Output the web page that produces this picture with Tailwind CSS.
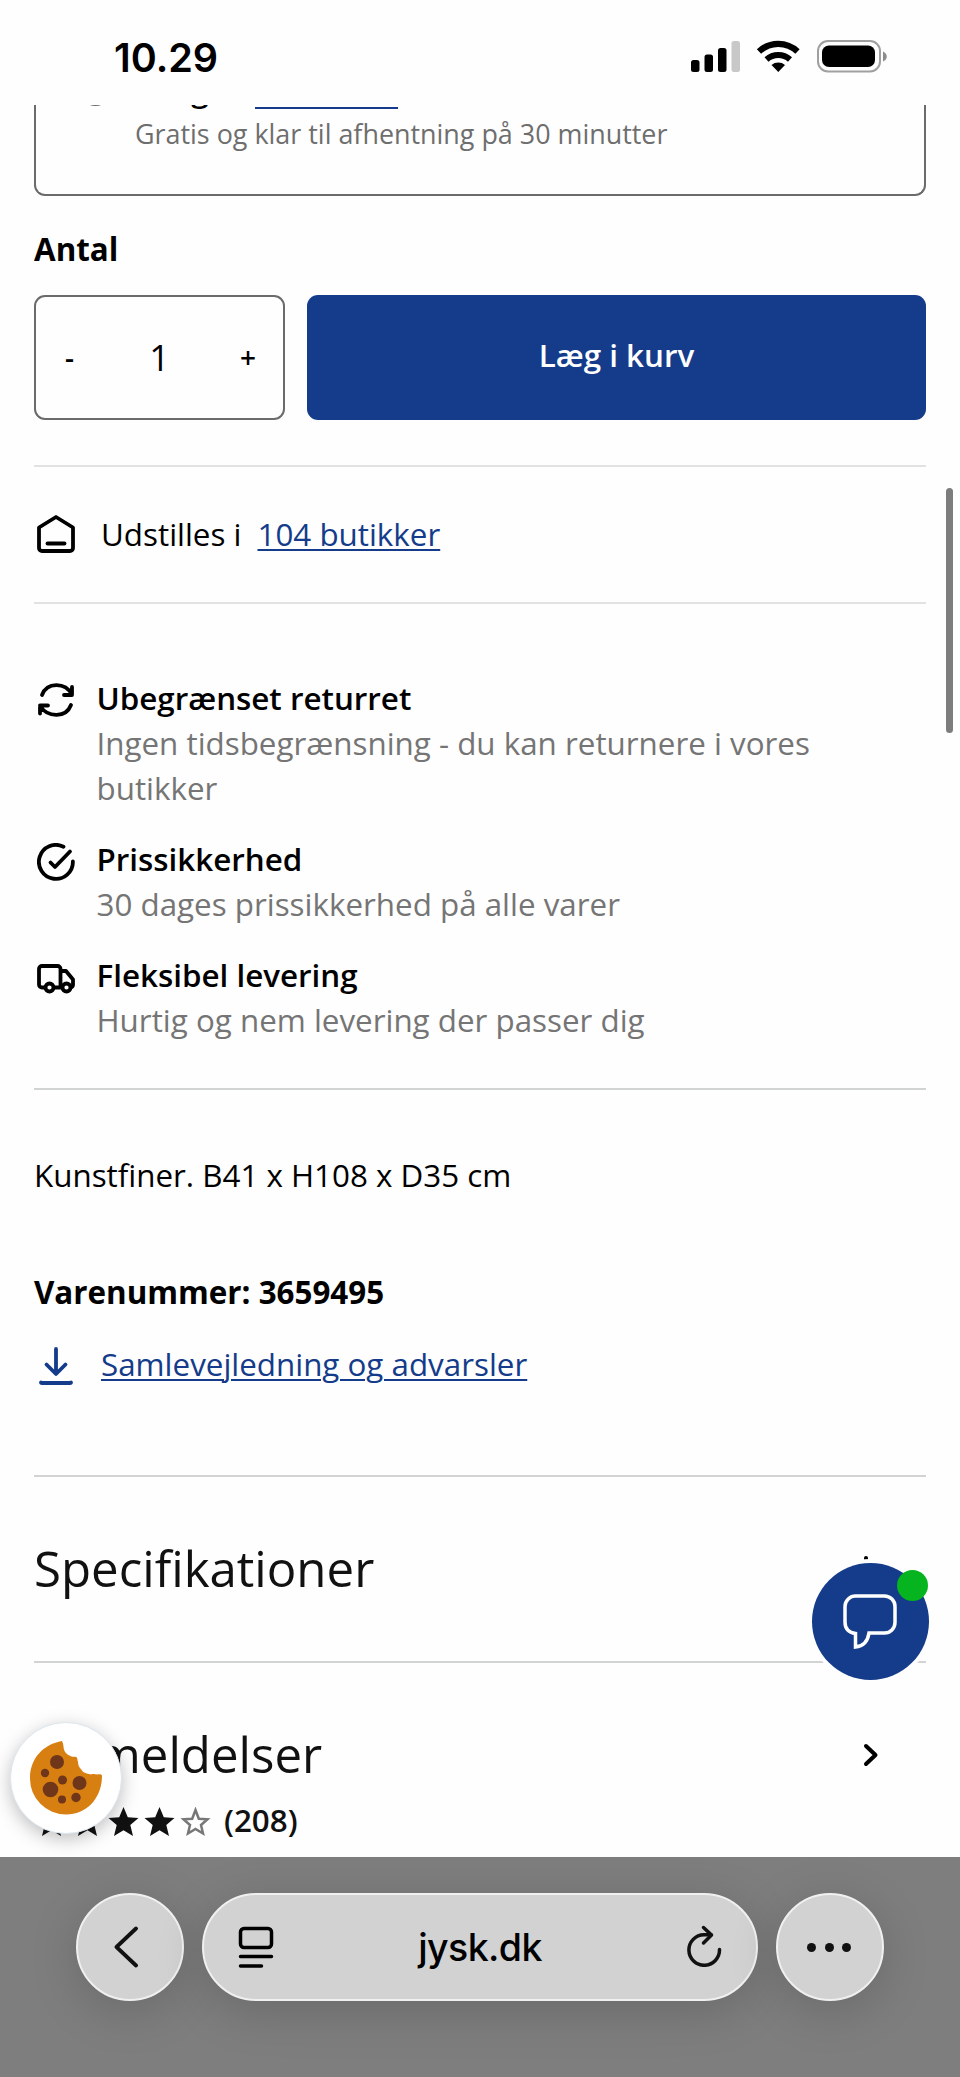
<!DOCTYPE html>
<html lang="da">

<head>
    <meta charset="UTF-8">
    <meta name="viewport" content="width=device-width, initial-scale=1.0">
    <title>JYSK</title>
    <script src="https://cdn.jsdelivr.net/npm/@tailwindcss/browser@4"></script>
</head>

<body class="bg-white">
    <div class="relative w-[960px] h-[2077px] overflow-hidden flex flex-col bg-[#fefefe] text-black font-['Open_Sans',sans-serif] text-[31.35px] leading-[45px]">

        <!-- Status bar -->
        <header class="h-[105px] shrink-0 flex items-start justify-between pl-[114px] pr-[72px]">
            <span class="mt-[34px] font-['Inter',sans-serif] font-semibold text-[39.5px] leading-[49px]">10.29</span>
            <svg class="mt-[40px]" width="197" height="33" viewBox="0 0 197 33">
                <rect x="0" y="20" width="8.500" height="12" rx="2.500" />
                <rect x="13.500" y="14.500" width="8.500" height="17.500" rx="2.500" />
                <rect x="27" y="8" width="8.500" height="24" rx="2.500" />
                <rect x="40.500" y="1" width="8.500" height="31" rx="2.500" fill="#c8c8c8" />
                <path d="M68 11.500a28 28 0 0 1 38.500 0" fill="none" stroke="#000" stroke-width="6.200" />
                <path d="M75.500 19.500a17.500 17.500 0 0 1 23.500 0" fill="none" stroke="#000" stroke-width="6" />
                <path d="M80.500 25a10.500 10.500 0 0 1 13.500 0L87.300 32z" />
                <rect x="127" y="1" width="62" height="30.500" rx="10" fill="none" stroke="#a0a0a0" stroke-width="2" />
                <rect x="131" y="5.500" width="53" height="21.500" rx="7" />
                <path d="M192 11.500c5 2 5 8 0 10z" fill="#8c8c8c" />
            </svg>
        </header>

        <main class="px-[34px] h-[1752px] shrink-0 overflow-hidden">

            <!-- Pickup option -->
            <div class="relative h-[91px] overflow-hidden border-2 border-t-0 border-[#6b6b6b] rounded-b-[11px] pl-[99px]">
                <span class="absolute left-[43px] -top-[32px] size-[33px] rounded-full border-2 border-[#6b6b6b]"></span>
                <p class="-mt-[38px] mb-px h-[45px] flex font-semibold">Vælg<a class="ml-[46px] w-[143px] h-[41.500px] border-b-[2.500px] border-[#143c8a] text-[#143c8a] font-normal text-[28px]">din butik</a></p>
                <p class="text-[26.9px] leading-[42px] text-[#6e6e6e]">Gratis og klar til afhentning på 30 minutter</p>
            </div>

            <!-- Quantity and add to cart -->
            <p class="mt-[30px] font-bold">Antal</p>
            <div class="mt-[24px] h-[125px] flex gap-[22px]">
                <div class="w-[251px] border-2 border-[#6b6b6b] rounded-[11px] flex items-center justify-between pl-[29px] pr-[27px]">
                    <span class="font-semibold text-[28px]">-</span>
                    <span class="-mt-px ml-[5px] text-[35.7px]">1</span>
                    <span class="font-semibold text-[28px]">+</span>
                </div>
                <button class="flex-1 bg-[#143c8a] text-white font-semibold rounded-[11px] pb-[7px]">Læg i kurv</button>
            </div>

            <!-- Stores -->
            <div class="mt-[45px] h-[139px] border-y-2 border-[#e2e2e2] flex items-center pb-[2px]">
                <svg class="ml-[3px]" width="38" height="38" viewBox="0 0 38 38" fill="none" stroke="#000" stroke-width="3.800" stroke-linecap="round" stroke-linejoin="round">
                    <path d="M2 12.500 19 2l17 10.500V33a3 3 0 0 1-3 3H5a3 3 0 0 1-3-3z" />
                    <path d="M10.500 28.500h17" />
                </svg>
                <span class="ml-[26px]">Udstilles i</span>
                <a class="ml-[16px] text-[#143c8a] underline decoration-2 underline-offset-[3px]">104 butikker</a>
            </div>

            <!-- Benefits -->
            <ul class="h-[486px] pt-[71px] border-b-2 border-[#d2d3d3] flex flex-col gap-[26px]">
                <li class="flex">
                    <svg class="ml-[3px] mt-[7px] mr-[21.500px] shrink-0" width="38" height="38" viewBox="0 0 38 38" fill="none" stroke="#000" stroke-width="3.800" stroke-linecap="round" stroke-linejoin="round">
                        <path d="M5 13C10 0 28 0 35 12.500M35 5v8h-8" />
                        <path d="M34 23C29 36 11 36 3 24M3 31.500V23.500h8" />
                    </svg>
                    <div>
                        <h3 class="font-semibold">Ubegrænset returret</h3>
                        <p class="text-[#757575]">Ingen tidsbegrænsning - du kan returnere i vores<br>butikker</p>
                    </div>
                </li>
                <li class="flex">
                    <svg class="ml-[3px] mt-[7px] mr-[21.500px] shrink-0" width="38" height="38" viewBox="0 0 38 38" fill="none" stroke="#000" stroke-width="3.800" stroke-linecap="round" stroke-linejoin="round">
                        <path d="M26.500 3.700A17 17 0 1 0 35.900 18.500" />
                        <path d="M13.500 19.500 18 24 33 8.500" />
                    </svg>
                    <div>
                        <h3 class="font-semibold">Prissikkerhed</h3>
                        <p class="text-[#757575]">30 dages prissikkerhed på alle varer</p>
                    </div>
                </li>
                <li class="flex">
                    <svg class="ml-[3px] mt-[7px] mr-[21.500px] shrink-0" width="38" height="38" viewBox="0 0 38 38" fill="none" stroke="#000" stroke-width="3.800" stroke-linecap="round" stroke-linejoin="round">
                        <path d="M7.500 28.500H5a3 3 0 0 1-3-3V10a3 3 0 0 1 3-3h15.500a3 3 0 0 1 3 3v18.500H17.500M23.500 12h5.500L36 20.500v5a3 3 0 0 1-2 3" />
                        <circle cx="12.500" cy="28.500" r="4" />
                        <circle cx="29.500" cy="28.500" r="4" />
                    </svg>
                    <div>
                        <h3 class="font-semibold">Fleksibel levering</h3>
                        <p class="text-[#757575]">Hurtig og nem levering der passer dig</p>
                    </div>
                </li>
            </ul>

            <!-- Product info -->
            <div class="h-[387px] pt-[62px] border-b-2 border-[#d2d3d3]">
                <p>Kunstfiner. B41 x H108 x D35 cm</p>
                <p class="mt-[72px] font-bold">Varenummer: 3659495</p>
                <div class="mt-[27px] flex items-center">
                    <svg class="ml-[5px] mt-1" width="34" height="38" viewBox="0 0 34 38" fill="none" stroke="#143c8a" stroke-width="3.800" stroke-linecap="round" stroke-linejoin="round">
                        <path d="M17 2v24M7.500 17.500 17 27l9.500-9.500" />
                        <path d="M2 35.500q0 .5 1 .5h28q1 0 1-.5" />
                    </svg>
                    <a class="ml-[28px] text-[#143c8a] underline decoration-2 underline-offset-[3px]">Samlevejledning og advarsler</a>
                </div>
            </div>

            <!-- Accordions -->
            <div class="h-[186px] border-b-2 border-[#d2d3d3] flex items-center justify-between pb-[2px] pr-[43px]">
                <h2 class="text-[49.200px] leading-[60px] text-[#111]">Specifikationer</h2>
                <svg width="34" height="24" viewBox="0 0 34 24" fill="none" stroke="#000" stroke-width="4" stroke-linecap="round">
                    <path d="M17 2v20M7 12h20" />
                </svg>
            </div>
            <div class="pt-[61px] text-[#111]">
                <div class="flex items-center justify-between pr-[47px]">
                    <h2 class="text-[49.200px] leading-[60px]">Anmeldelser</h2>
                    <svg class="mt-[2px]" width="16" height="24" viewBox="0 0 16 24" fill="none" stroke="#000" stroke-width="4" stroke-linecap="round" stroke-linejoin="round">
                        <path d="M3 3l9.500 9L3 21" />
                    </svg>
                </div>
                <div class="mt-[13px] flex items-center">
                    <svg class="mt-[5px]" width="180" height="30" viewBox="0 0 180 30">
                        <defs>
                            <path id="star" d="M15 0 19.300 10.300 30 11 21.800 18 24.500 29 15 23.200 5.500 29 8.200 18 0 11 10.700 10.300z" />
                        </defs>
                        <use href="#star" x="2.500" fill="#111" />
                        <use href="#star" x="38.500" fill="#111" />
                        <use href="#star" x="74.500" fill="#111" />
                        <use href="#star" x="110.500" fill="#111" />
                        <path d="M161.500 3 164.800 11.700 173.500 12.300 167 18 169 26.500 161.500 22 154 26.500 156 18 149.500 12.300 158.200 11.700z" fill="none" stroke="#777" stroke-width="2.500" />
                    </svg>
                    <span class="ml-[10px] font-semibold text-[31.350px]">(208)</span>
                </div>
            </div>
        </main>

        <!-- Browser toolbar -->
        <footer class="flex-1 bg-[#7e7e7e] flex items-start justify-center gap-[18px] pt-[36px]">
            <div class="size-[108px] rounded-full bg-[#d2d2d2] border-2 border-[#f0f0f0] flex items-center justify-center shadow-[0_10px_50px_rgba(0,0,0,0.16)]">
                <svg class="-ml-[8px]" width="24" height="42" viewBox="0 0 24 42" fill="none" stroke="#111" stroke-width="3.800" stroke-linecap="round" stroke-linejoin="round">
                    <path d="M22 2.500 2.500 21 22 39.500" />
                </svg>
            </div>
            <div class="w-[556px] h-[108px] rounded-full bg-[#d2d2d2] border-2 border-[#f0f0f0] flex items-center justify-between pl-[34px] pr-[34px] shadow-[0_10px_50px_rgba(0,0,0,0.16)]">
                <svg width="36" height="42" viewBox="0 0 36 42" fill="none" stroke="#000" stroke-width="3.500" stroke-linecap="round">
                    <rect x="2.500" y="2.500" width="31" height="19" rx="3.500" />
                    <path d="M2.500 30.500h31M2.500 40h21" />
                </svg>
                <span class="font-['Inter',sans-serif] font-medium text-[37.500px] tracking-[-0.6px]">jysk.dk</span>
                <svg class="-mt-[2px]" width="36" height="42" viewBox="0 0 36 42" fill="none" stroke="#111" stroke-width="3.500" stroke-linecap="round" stroke-linejoin="round">
                    <path d="M33.500 24.500A15.300 15.300 0 1 1 18 9.700h7" />
                    <path d="M17.500 2.500 25.500 10l-8 8" />
                </svg>
            </div>
            <div class="size-[108px] rounded-full bg-[#d2d2d2] border-2 border-[#f0f0f0] flex items-center justify-center gap-[8.500px] pr-[2px] shadow-[0_10px_50px_rgba(0,0,0,0.16)]">
                <span class="size-[9px] rounded-full bg-[#111]"></span>
                <span class="size-[9px] rounded-full bg-[#111]"></span>
                <span class="size-[9px] rounded-full bg-[#111]"></span>
            </div>
        </footer>

        <!-- Scrollbar -->
        <div class="absolute left-[946px] top-[488px] w-[7px] h-[245px] rounded-full bg-[#7d7d7d]"></div>

        <!-- Chat button -->
        <div class="absolute left-[812px] top-[1563px] size-[117px] rounded-full bg-[#143c8a] ring-4 ring-[#fefefe]">
            <svg class="absolute left-[31px] top-[31px]" width="55" height="56" viewBox="0 0 55 56" fill="none" stroke="#fff" stroke-width="3.500">
                <path d="M13 2h28.500a10.500 10.500 0 0 1 10.500 10.500v16a10.500 10.500 0 0 1-10.500 10.500H26Q24 52 12.500 53V39.500Q2 38 2 28V12.500A10.500 10.500 0 0 1 13 2z" />
            </svg>
            <span class="absolute left-[85px] top-[7px] size-[31px] rounded-full bg-[#05b41e]"></span>
        </div>

        <!-- Cookie button -->
        <div class="absolute left-[10px] top-[1722px] size-[112px] rounded-full bg-white border border-[#dce6ee] shadow-[0_5px_18px_rgba(0,0,0,0.25)]">
            <svg class="absolute left-[19px] top-[18px]" width="73" height="74" viewBox="0 0 73 74">
                <path d="M32 0C14 3 0 17 0 37a36 36 0 0 0 36 36.500C57 73.500 72 57 72 34.500q-1-1.800-3-1.200c-3 .4-5-.8-8 .2-5-1-8-2-9.700-5C49 26 48 24 48 20.500 47 19 48 16.500 46 16c-2-.8-3 .4-5-.8-3-1-5-2.500-6.500-5.200C33 7 34 3 32 0z" fill="#d87f12" />
                <g fill="#70361a">
                    <circle cx="27" cy="21" r="7" />
                    <circle cx="15" cy="32" r="4.200" />
                    <circle cx="32.500" cy="39" r="4.500" />
                    <circle cx="49.500" cy="42" r="7" />
                    <circle cx="20.500" cy="48.500" r="7.800" />
                    <circle cx="32" cy="58.500" r="4" />
                    <circle cx="46" cy="56.500" r="4.700" />
                </g>
            </svg>
        </div>
    </div>
</body>

</html>
